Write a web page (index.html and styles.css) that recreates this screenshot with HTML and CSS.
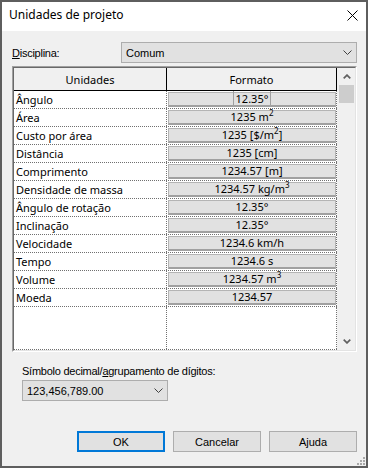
FILE: index.html
```html
<!DOCTYPE html>
<html>
<head>
<meta charset="utf-8">
<link rel="stylesheet" href="styles.css">
</head>
<body>
<div class="window">
  <div class="titlebar">
    <span class="title">Unidades de projeto</span>
    <svg class="close" width="11" height="11" viewBox="0 0 11 11"><path d="M0.5 0.5L10.5 10.5M10.5 0.5L0.5 10.5" stroke="#000" stroke-width="1" fill="none"/></svg>
  </div>
  <div class="content">
    <div class="disc-row">
      <span class="lbl"><u>D</u>isciplina:</span>
      <div class="select wide">
        <span>Comum</span>
        <svg class="chev" width="9" height="5" viewBox="0 0 9 5"><path d="M0.5 0.5L4.5 4.5L8.5 0.5" stroke="#404040" stroke-width="1" fill="none"/></svg>
      </div>
    </div>
    <div class="grid-outer">
      <div class="grid-inner">
        <div class="table">
          <div class="thead">
            <div class="th c1">Unidades</div>
            <div class="th c2">Formato</div>
          </div>
          <div class="tbody">
            <div class="row"><div class="td c1">Ângulo</div><div class="td c2"><div class="fmt"><span class="focus">12.35°</span></div></div></div>
            <div class="row"><div class="td c1">Área</div><div class="td c2"><div class="fmt">1235 m<span class="sup">2</span></div></div></div>
            <div class="row"><div class="td c1">Custo por área</div><div class="td c2"><div class="fmt">1235 [$/m<span class="sup">2</span>]</div></div></div>
            <div class="row"><div class="td c1">Distância</div><div class="td c2"><div class="fmt">1235 [cm]</div></div></div>
            <div class="row"><div class="td c1">Comprimento</div><div class="td c2"><div class="fmt">1234.57 [m]</div></div></div>
            <div class="row"><div class="td c1">Densidade de massa</div><div class="td c2"><div class="fmt">1234.57 kg/m<span class="sup">3</span></div></div></div>
            <div class="row"><div class="td c1">Ângulo de rotação</div><div class="td c2"><div class="fmt">12.35°</div></div></div>
            <div class="row"><div class="td c1">Inclinação</div><div class="td c2"><div class="fmt">12.35°</div></div></div>
            <div class="row"><div class="td c1">Velocidade</div><div class="td c2"><div class="fmt">1234.6 km/h</div></div></div>
            <div class="row"><div class="td c1">Tempo</div><div class="td c2"><div class="fmt">1234.6 s</div></div></div>
            <div class="row"><div class="td c1">Volume</div><div class="td c2"><div class="fmt">1234.57 m<span class="sup">3</span></div></div></div>
            <div class="row"><div class="td c1">Moeda</div><div class="td c2"><div class="fmt">1234.57</div></div></div>
            <div class="row filler"><div class="td c1"></div><div class="td c2"></div></div>
          </div>
        </div>
        <div class="scrollbar">
          <div class="sb-btn">
            <svg width="8" height="5" viewBox="0 0 8 5"><path d="M0.7 4.3L4 1.1L7.3 4.3" stroke="#606060" stroke-width="1.7" fill="none"/></svg>
          </div>
          <div class="sb-thumb"></div>
          <div class="sb-track"></div>
          <div class="sb-btn">
            <svg width="8" height="5" viewBox="0 0 8 5"><path d="M0.7 0.7L4 3.9L7.3 0.7" stroke="#606060" stroke-width="1.7" fill="none"/></svg>
          </div>
        </div>
      </div>
    </div>
    <div class="lbl2">Símbolo decimal/<u>a</u>grupamento de dígitos:</div>
    <div class="select narrow">
      <span>123,456,789.00</span>
      <svg class="chev" width="9" height="5" viewBox="0 0 9 5"><path d="M0.5 0.5L4.5 4.5L8.5 0.5" stroke="#404040" stroke-width="1" fill="none"/></svg>
    </div>
    <div class="buttons">
      <div class="btn default">OK</div>
      <div class="btn">Cancelar</div>
      <div class="btn">Ajuda</div>
    </div>
  </div>
  <div class="grip">
    <span class="dot d1"></span>
    <span class="dot d2"></span><span class="dot d3"></span>
    <span class="dot d4"></span><span class="dot d5"></span><span class="dot d6"></span>
  </div>
</div>
</body>
</html>
```

FILE: styles.css
```css
* { box-sizing: border-box; }
html, body { margin: 0; padding: 0; }
body {
  font-family: "Liberation Sans", Arial, sans-serif;
  font-size: 11px;
  color: #000;
  background: #f0f0f0;
}
.window {
  position: relative;
  width: 368px;
  height: 468px;
  border: 2px solid #5e5e5e;
  background: #f0f0f0;
  display: flex;
  flex-direction: column;
}
.titlebar {
  height: 29px;
  background: #fff;
  display: flex;
  align-items: flex-start;
  padding: 5px 8px 0 7px;
  line-height: 16px;
}
.title {
  font-family: "Noto Sans", "DejaVu Sans", sans-serif;
  font-size: 12px;
}
.close { margin-left: auto; margin-top: 3px; }
.content {
  display: flex;
  flex-direction: column;
  padding: 0 9px 0 10px;
}
.disc-row {
  margin-top: 11px;
  height: 21px;
  display: flex;
  align-items: center;
}
.lbl { width: 109px; letter-spacing: -0.25px; }
.select {
  height: 21px;
  background: #e1e1e1;
  border: 1px solid #adadad;
  display: flex;
  align-items: center;
  padding: 0 4px 0 4px;
}
.select .chev { margin-left: auto; }
.select.wide { flex: 1; }
.select.narrow { width: 146px; margin-left: 10px; margin-top: 1px; }
.grid-outer {
  margin-top: 3px;
  height: 286px;
  border: 1px solid;
  border-color: #a0a0a0 #ffffff #ffffff #a0a0a0;
}
.grid-inner {
  height: 100%;
  border: 1px solid;
  border-color: #696969 #e3e3e3 #e3e3e3 #696969;
  display: flex;
  background: #fff;
}
.table {
  width: 323px;
  display: flex;
  flex-direction: column;
  font-family: "Noto Sans", "DejaVu Sans", sans-serif;
  font-size: 11px;
}
.thead {
  height: 23px;
  display: flex;
  border-bottom: 1px solid #000;
  background: #f0f0f0;
}
.th {
  display: flex;
  align-items: center;
  justify-content: center;
  border-right: 1px solid #000;
}
.c1 { width: 153px; }
.c2 { width: 170px; }
.tbody {
  flex: 1;
  display: flex;
  flex-direction: column;
  border-bottom: 1px dotted #707070;
}
.row {
  height: 18px;
  display: flex;
  border-bottom: 1px dotted #707070;
}
.row.filler { flex: 1; border-bottom: none; }
.td {
  height: 100%;
  border-right: 1px dotted #707070;
}
.td.c1 {
  padding-left: 2px;
  line-height: 17px;
  white-space: nowrap;
}
.fmt {
  margin: 1px 0 0 1px;
  height: 15px;
  background: #e1e1e1;
  border: 1px solid #b4b4b4;
  border-bottom: 2px solid #a0a0a0;
  text-align: center;
  line-height: 12px;
  white-space: nowrap;
}
.focus {
  border-left: 1px solid #a0a0a0;
  border-right: 1px solid #a0a0a0;
  padding: 0 2px;
}
.sup {
  font-size: 8px;
  vertical-align: 5px;
  line-height: 0;
}
.scrollbar {
  width: 18px;
  background: #f0f0f0;
  display: flex;
  flex-direction: column;
}
.sb-btn {
  height: 17px;
  display: flex;
  align-items: center;
  justify-content: center;
  padding-left: 1px;
}
.sb-thumb {
  height: 18px;
  margin: 0 1px 0 2px;
  background: #cdcdcd;
}
.sb-track { flex: 1; }
.lbl2 {
  margin-top: 11px;
  margin-left: 10px;
  line-height: 16px;
  letter-spacing: -0.25px;
}
.buttons {
  margin-top: 30px;
  display: flex;
  justify-content: flex-end;
  gap: 8px;
}
.btn {
  width: 88px;
  height: 21px;
  background: #e1e1e1;
  border: 1px solid #adadad;
  display: flex;
  align-items: center;
  justify-content: center;
}
.btn.default { border: 2px solid #0078d7; }
.grip {
  position: absolute;
  right: 1px;
  bottom: 1px;
  width: 8px;
  height: 8px;
}
.dot {
  position: absolute;
  width: 2px;
  height: 2px;
  background: #a8a8a8;
}
.d1 { right: 0; top: 0; }
.d2 { right: 3px; top: 3px; }
.d3 { right: 0; top: 3px; }
.d4 { right: 6px; top: 6px; }
.d5 { right: 3px; top: 6px; }
.d6 { right: 0; top: 6px; }
```
